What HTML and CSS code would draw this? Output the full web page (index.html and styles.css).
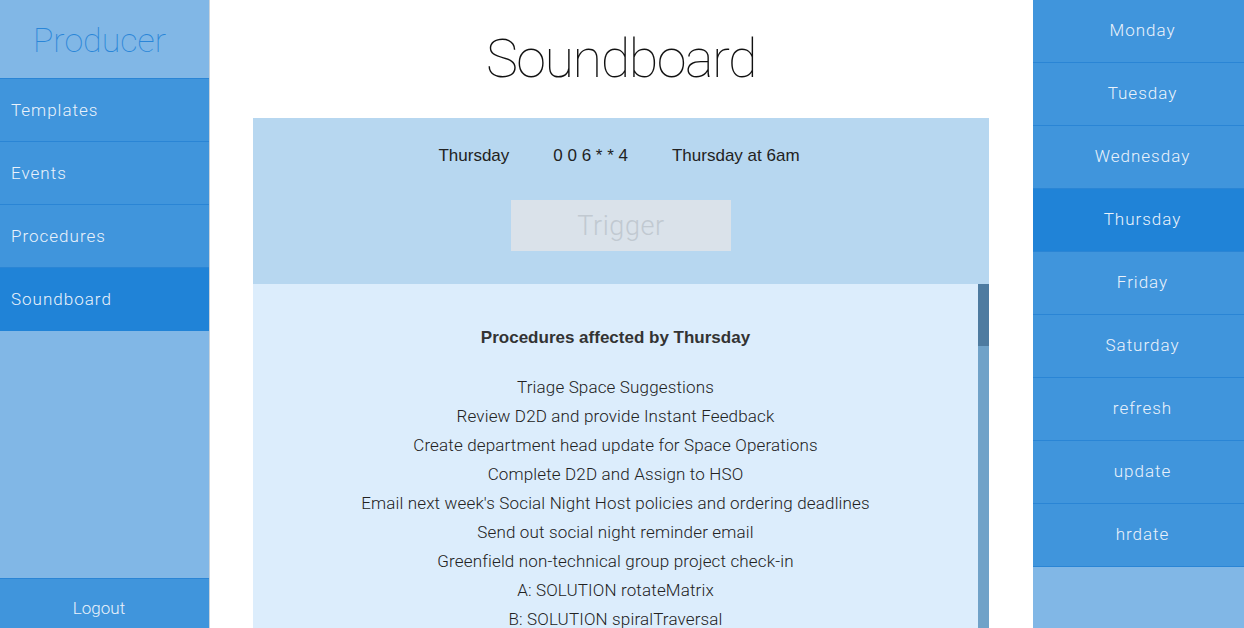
FILE: index.html
```html
<!DOCTYPE html>
<html>
<head>
<meta charset="utf-8">
<title>Soundboard</title>
<link rel="stylesheet" href="styles.css">
</head>
<body>
<div class="app">
  <aside class="sidebar">
    <div class="brand">Producer</div>
    <nav class="nav">
      <a class="nav-item">Templates</a>
      <a class="nav-item">Events</a>
      <a class="nav-item">Procedures</a>
      <a class="nav-item active">Soundboard</a>
    </nav>
    <div class="spacer"></div>
    <a class="logout">Logout</a>
  </aside>
  <main class="main">
    <h1 class="title">Soundboard</h1>
    <section class="panel">
      <div class="info-row">
        <span>Thursday</span>
        <span>0 0 6 * * 4</span>
        <span>Thursday at 6am</span>
      </div>
      <button class="trigger">Trigger</button>
    </section>
    <section class="list-wrap">
      <div class="list">
        <h2 class="list-title">Procedures affected by Thursday</h2>
        <ul class="items">
          <li>Triage Space Suggestions</li>
          <li>Review D2D and provide Instant Feedback</li>
          <li>Create department head update for Space Operations</li>
          <li>Complete D2D and Assign to HSO</li>
          <li>Email next week's Social Night Host policies and ordering deadlines</li>
          <li>Send out social night reminder email</li>
          <li>Greenfield non-technical group project check-in</li>
          <li>A: SOLUTION rotateMatrix</li>
          <li>B: SOLUTION spiralTraversal</li>
          <li>C: SOLUTION treeMap</li>
        </ul>
      </div>
      <div class="scrollbar"><div class="thumb"></div></div>
    </section>
  </main>
  <aside class="days">
    <a class="day">Monday</a>
    <a class="day">Tuesday</a>
    <a class="day">Wednesday</a>
    <a class="day active">Thursday</a>
    <a class="day">Friday</a>
    <a class="day">Saturday</a>
    <a class="day">refresh</a>
    <a class="day">update</a>
    <a class="day">hrdate</a>
  </aside>
</div>
</body>
</html>
```

FILE: styles.css
```css
* { box-sizing: border-box; }
html, body { margin: 0; padding: 0; height: 100%; overflow: hidden; }
body {
  font-family: Roboto, "Liberation Sans", sans-serif;
  font-weight: 300;
  background: #ffffff;
  color: #222;
}
.app {
  display: flex;
  height: 628px;
}
.sidebar {
  width: 210px;
  flex: 0 0 210px;
  background: #81b7e6;
  border-right: 1px solid #c9d3dc;
  display: flex;
  flex-direction: column;
}
.brand {
  height: 79px;
  border-bottom: 1px solid #2a85d5;
  display: flex;
  align-items: center;
  justify-content: center;
  font-size: 34px;
  font-weight: 100;
  color: #2a86d8;
  padding-top: 1px;
  padding-right: 10px;
}
.nav { display: flex; flex-direction: column; }
.nav-item {
  height: 63px;
  display: flex;
  align-items: center;
  padding-left: 11px;
  padding-bottom: 1px;
  background: #4095dc;
  border-bottom: 1px solid #2a85d5;
  color: #eaf2fb;
  font-size: 17px;
  letter-spacing: 1px;
}
.nav-item.active {
  background: #2083d7;
  border-bottom: none;
  height: 63px;
}
.spacer { flex: 1; }
.logout {
  height: 50px;
  background: #4095dc;
  border-top: 1px solid #2a85d5;
  display: flex;
  align-items: center;
  justify-content: center;
  color: #eaf2fb;
  font-size: 17px;
  padding-top: 8px;
  padding-right: 11px;
}
.main {
  flex: 1;
  display: flex;
  flex-direction: column;
  padding: 0 44px 0 43px;
  overflow: hidden;
}
.title {
  margin: 0;
  height: 118px;
  display: flex;
  align-items: center;
  justify-content: center;
  font-size: 54px;
  font-weight: 100;
  letter-spacing: -1.5px;
  color: #111;
  padding-bottom: 2px;
}
.panel {
  background: #b7d7f0;
  height: 166px;
  display: flex;
  flex-direction: column;
  align-items: center;
  padding-top: 28px;
}
.info-row {
  display: flex;
  gap: 44px;
  font-family: "Liberation Sans", Arial, sans-serif;
  font-size: 17px;
  font-weight: 400;
  color: #222;
  line-height: 20px;
  padding-right: 4px;
}
.trigger {
  margin-top: 34px;
  width: 220px;
  height: 51px;
  border: none;
  background: #dae2ea;
  color: #c1c9d1;
  font-family: Roboto, "Liberation Sans", sans-serif;
  font-weight: 300;
  font-size: 27px;
  letter-spacing: 0.6px;
}
.list-wrap {
  flex: 1;
  display: flex;
  background: #dcedfc;
  min-height: 0;
}
.list {
  flex: 1;
  padding-top: 43px;
  text-align: center;
}
.list-title {
  margin: 0 0 24px;
  font-family: "Liberation Sans", Arial, sans-serif;
  font-size: 17px;
  font-weight: 700;
  color: #333;
  line-height: 22px;
}
.items {
  list-style: none;
  margin: 0;
  padding: 0;
  font-size: 17px;
  letter-spacing: 0.15px;
  line-height: 29px;
  color: #222;
}
.scrollbar {
  width: 11px;
  flex: 0 0 11px;
  background: #70a2c8;
}
.thumb {
  height: 62px;
  background: #4e7ba0;
}
.days {
  width: 211px;
  flex: 0 0 211px;
  background: #81b7e6;
  display: flex;
  flex-direction: column;
}
.day {
  height: 63px;
  flex: 0 0 63px;
  display: flex;
  align-items: center;
  justify-content: center;
  padding-left: 8px;
  padding-bottom: 2px;
  background: #4095dc;
  border-bottom: 1px solid #2a85d5;
  color: #eaf2fb;
  font-size: 17px;
  letter-spacing: 1px;
}
.day.active {
  background: #2083d7;
}
```
